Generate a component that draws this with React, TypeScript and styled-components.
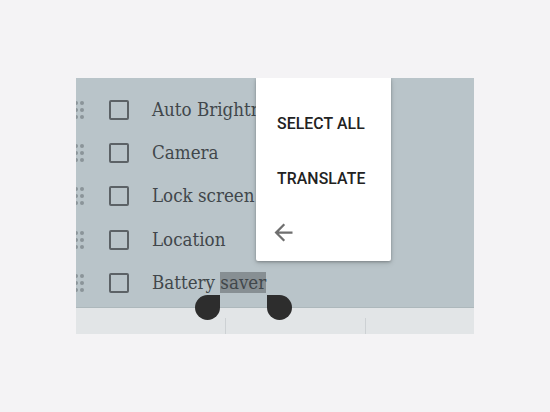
import React from "react";
import styled, { createGlobalStyle } from "styled-components";

const Global = createGlobalStyle`
  html, body { margin: 0; padding: 0; background: #f4f3f5; }
  body { width: 550px; height: 412px; overflow: hidden; }
`;

const Page = styled.div`
  padding: 78px 76px;
`;

const Panel = styled.div`
  position: relative;
  width: 398px;
  height: 256px;
  display: flex;
  flex-direction: column;
  overflow: hidden;
`;

const ListArea = styled.div`
  flex: 1;
  background: #b9c4c9;
  border-bottom: 1px solid #adb8bc;
  padding-top: 10px;
  display: flex;
  flex-direction: column;
  overflow: hidden;
`;

const Row = styled.div`
  height: 43.3px;
  display: flex;
  align-items: center;
  flex-shrink: 0;
`;

const Handle = styled.div`
  width: 10px;
  margin-left: -2px;
  display: grid;
  grid-template-columns: repeat(2, 4px);
  grid-auto-rows: 4px;
  column-gap: 2px;
  row-gap: 3px;
  span {
    width: 4px;
    height: 4px;
    border-radius: 50%;
    background: #8b9499;
  }
`;

const Box = styled.div`
  width: 16px;
  height: 16px;
  border: 2px solid #5c6266;
  border-radius: 2px;
  margin-left: 25px;
  flex-shrink: 0;
`;

const Label = styled.div`
  margin-left: 23px;
  font-family: "DejaVu Serif Condensed", "DejaVu Serif", serif;
  font-stretch: condensed;
  font-size: 18.6px;
  color: #41474b;
  white-space: nowrap;
  line-height: 24px;
`;

const Selected = styled.span`
  background: #878f93;
`;

const BottomBar = styled.div`
  height: 26px;
  background: #e2e5e7;
  display: grid;
  grid-template-columns: 149px 140px 1fr;
  align-items: end;
`;

const BarCell = styled.div<{ $divider?: boolean }>`
  height: 16px;
  border-left: ${(p) => (p.$divider ? "1px solid #cdd1d4" : "none")};
`;

const Menu = styled.div`
  position: absolute;
  left: 180px;
  top: 0;
  width: 135px;
  height: 183px;
  background: #ffffff;
  border-radius: 0 0 2px 2px;
  box-shadow: 0 1px 3px rgba(0, 0, 0, 0.28), 0 2px 6px rgba(0, 0, 0, 0.12);
  display: flex;
  flex-direction: column;
  padding-top: 38px;
  box-sizing: border-box;
`;

const MenuItem = styled.div`
  height: 55px;
  padding-left: 21px;
  display: flex;
  align-items: flex-start;
  font-family: Roboto, "Liberation Sans", sans-serif;
  font-weight: 500;
  font-size: 15.8px;
  color: #222222;
  letter-spacing: 0.1px;
  line-height: 16px;
`;

const BackIcon = styled.div`
  padding-left: 14px;
  margin-top: -7px;
  display: flex;
`;

const Knob = styled.div<{ $side: "left" | "right" }>`
  position: absolute;
  top: 217px;
  left: ${(p) => (p.$side === "left" ? "119px" : "191px")};
  width: 25px;
  height: 25px;
  background: #2d2d2d;
  border-radius: ${(p) => (p.$side === "left" ? "50% 0 50% 50%" : "0 50% 50% 50%")};
`;

const items = ["Auto Brightness", "Camera", "Lock screen", "Location"];

export default function App() {
  return (
    <>
      <Global />
      <Page>
        <Panel>
          <ListArea>
            {items.map((t) => (
              <Row key={t}>
                <Handle>
                  <span /><span /><span /><span /><span /><span />
                </Handle>
                <Box />
                <Label>{t}</Label>
              </Row>
            ))}
            <Row>
              <Handle>
                <span /><span /><span /><span /><span /><span />
              </Handle>
              <Box />
              <Label>
                Battery <Selected>saver</Selected>
              </Label>
            </Row>
          </ListArea>
          <BottomBar>
            <BarCell />
            <BarCell $divider />
            <BarCell $divider />
          </BottomBar>
          <Menu>
            <MenuItem>SELECT ALL</MenuItem>
            <MenuItem>TRANSLATE</MenuItem>
            <BackIcon>
              <svg width="27" height="27" viewBox="0 0 24 24">
                <path
                  d="M20 11H7.83l5.59-5.59L12 4l-8 8 8 8 1.41-1.41L7.83 13H20v-2z"
                  fill="#6f6f6f"
                />
              </svg>
            </BackIcon>
          </Menu>
          <Knob $side="left" />
          <Knob $side="right" />
        </Panel>
      </Page>
    </>
  );
}
